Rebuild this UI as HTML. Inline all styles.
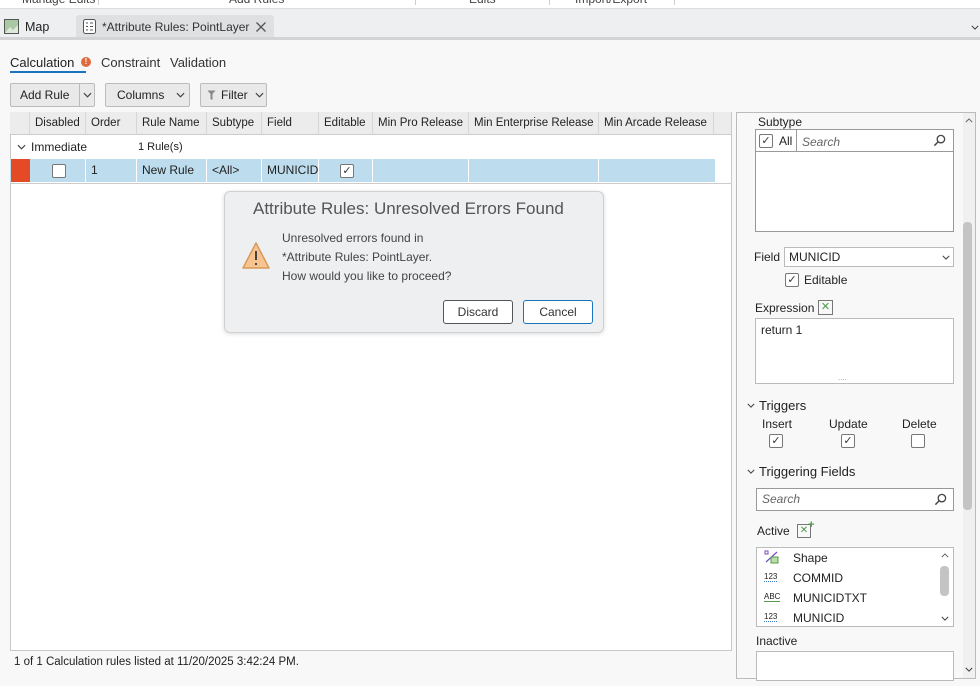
<!DOCTYPE html>
<html><head><style>
*{box-sizing:border-box;margin:0;padding:0}
body{width:980px;height:686px;overflow:hidden;background:#f8f8f8;font-family:"Liberation Sans",sans-serif;font-size:12px;color:#222;position:relative;white-space:nowrap}
.a{position:absolute}
.cb{position:absolute;width:14px;height:14px;border:1px solid #777;background:#fff;border-radius:2px;font-size:11px;line-height:12px;text-align:center;color:#333}
.hd{position:absolute;top:112px;height:23px;background:#ececec;border-right:1px solid #d6d6d6;border-bottom:1px solid #ccc;line-height:23px;padding-left:5px;font-size:11.5px;overflow:hidden}
.dc{position:absolute;top:159px;height:23px;border-right:1px solid #fff;line-height:23px;padding-left:5px}
.btn{position:absolute;top:83px;height:24px;border:1px solid #bbb;border-radius:2px;background:#e9e9e9;line-height:22px;font-size:12px}
.box{position:absolute;background:#fff;border:1px solid #aaa}
.ch{position:absolute}
</style></head><body>
<svg width="0" height="0" style="position:absolute"><defs>
<symbol id="dn" viewBox="0 0 10 6"><path d="M1 1 L5 5 L9 1" fill="none" stroke="#444" stroke-width="1.3"/></symbol>
<symbol id="up" viewBox="0 0 10 6"><path d="M1 5 L5 1 L9 5" fill="none" stroke="#666" stroke-width="1.2"/></symbol>
<symbol id="sr" viewBox="0 0 14 14"><circle cx="8.5" cy="5.5" r="4" fill="none" stroke="#444" stroke-width="1.4"/><path d="M5.5 8.5 L1.5 12.5" stroke="#444" stroke-width="1.6"/></symbol>
</defs></svg>
<!-- top ribbon remnant -->
<div class="a" style="left:0;top:0;width:980px;height:9px;background:#fff;border-bottom:1px solid #ddd;overflow:hidden">
<div class="a" style="left:22px;top:-8px;color:#444">Manage Edits</div>
<div class="a" style="left:98px;top:0;width:1px;height:5px;background:#ccc"></div>
<div class="a" style="left:229px;top:-8px;color:#444">Add Rules</div>
<div class="a" style="left:415px;top:0;width:1px;height:5px;background:#ccc"></div>
<div class="a" style="left:469px;top:-8px;color:#444">Edits</div>
<div class="a" style="left:549px;top:0;width:1px;height:5px;background:#ccc"></div>
<div class="a" style="left:575px;top:-8px;color:#444">Import/Export</div>
<div class="a" style="left:674px;top:0;width:1px;height:5px;background:#ccc"></div>
</div>
<!-- tab bar -->
<div class="a" style="left:0;top:9px;width:980px;height:31px;background:#eeeff1;border-bottom:3px solid #d4d4d6"></div>
<svg class="a" style="left:4px;top:19px" width="15" height="15"><rect x="0.5" y="0.5" width="14" height="14" fill="#a9c9a4" stroke="#555"/><path d="M1 14 L6 8 L9 11 L14 6 V14Z" fill="#dfe9d9"/></svg>
<div class="a" style="left:25px;top:20px;font-size:12.5px">Map</div>
<div class="a" style="left:76px;top:15px;width:198px;height:22px;background:#dfe0e2;border-radius:3px 3px 0 0"></div>
<svg class="a" style="left:83px;top:19px" width="13" height="15"><rect x="0.5" y="0.5" width="12" height="14" rx="2" fill="#fff" stroke="#555"/><path d="M3 4h2M7 4h3M3 7.5h2M7 7.5h3M3 11h2M7 11h3" stroke="#555"/></svg>
<div class="a" style="left:102px;top:20px;font-size:12px;color:#333">*Attribute Rules: PointLayer</div>
<svg class="a" style="left:256px;top:22px" width="10" height="10"><path d="M0.5 0.5L9.5 9.5M9.5 0.5L0.5 9.5" stroke="#555" stroke-width="1.3"/></svg>
<svg class="a" style="left:971px;top:25px" width="8" height="5"><use href="#dn"/></svg>
<!-- sub tabs -->
<div class="a" style="left:10px;top:55px;font-size:13px">Calculation</div>
<div class="a" style="left:81px;top:57px;width:10px;height:10px;border-radius:50%;background:#e06a3c;color:#fff;font-size:8px;line-height:10px;text-align:center;font-weight:bold">!</div>
<div class="a" style="left:10px;top:71px;width:76px;height:2px;background:#1a73c0"></div>
<div class="a" style="left:101px;top:55px;font-size:13px;color:#333">Constraint</div>
<div class="a" style="left:170px;top:55px;font-size:13px;color:#333">Validation</div>
<!-- buttons -->
<div class="btn" style="left:10px;width:85px"><span style="padding-left:9px">Add Rule</span><span class="a" style="left:68px;top:-1px;width:1px;height:24px;background:#bbb"></span><svg class="a" style="left:72px;top:8px" width="9" height="6"><use href="#dn"/></svg></div>
<div class="btn" style="left:105px;width:85px"><span style="padding-left:11px">Columns</span><svg class="a" style="left:70px;top:8px" width="9" height="6"><use href="#dn"/></svg></div>
<div class="btn" style="left:200px;width:67px"><svg class="a" style="left:6px;top:6px" width="9" height="11"><path d="M0.5 0.5H8.5L5.5 4V10L3.5 9V4Z" fill="#888"/></svg><span class="a" style="left:20px">Filter</span><svg class="a" style="left:54px;top:8px" width="9" height="6"><use href="#dn"/></svg></div>
<!-- grid -->
<div class="a" style="left:10px;top:112px;width:722px;height:539px;background:#fff;border:1px solid #c8c8c8"></div>
<div class="hd" style="left:10px;width:20px"></div>
<div class="hd" style="left:30px;width:56px">Disabled</div>
<div class="hd" style="left:86px;width:51px">Order</div>
<div class="hd" style="left:137px;width:70px">Rule Name</div>
<div class="hd" style="left:207px;width:55px">Subtype</div>
<div class="hd" style="left:262px;width:57px">Field</div>
<div class="hd" style="left:319px;width:54px">Editable</div>
<div class="hd" style="left:373px;width:96px">Min Pro Release</div>
<div class="hd" style="left:469px;width:130px">Min Enterprise Release</div>
<div class="hd" style="left:599px;width:115px">Min Arcade Release</div>
<div class="hd" style="left:714px;width:17px;border-right:none"></div>
<svg class="a" style="left:17px;top:144px" width="9" height="6"><use href="#dn"/></svg>
<div class="a" style="left:31px;top:140px">Immediate</div>
<div class="a" style="left:138px;top:141px;font-size:11px">1 Rule(s)</div>
<div class="a" style="left:10px;top:159px;width:705px;height:23px;background:#bddcee"></div>
<div class="a" style="left:11px;top:159px;width:19px;height:23px;background:#e44a25"></div>
<div class="dc" style="left:30px;width:56px"></div>
<div class="cb" style="left:52px;top:164px"></div>
<div class="dc" style="left:86px;width:51px">1</div>
<div class="dc" style="left:137px;width:70px">New Rule</div>
<div class="dc" style="left:207px;width:55px">&lt;All&gt;</div>
<div class="dc" style="left:262px;width:57px;overflow:hidden">MUNICID</div>
<div class="dc" style="left:319px;width:54px"></div>
<div class="cb" style="left:340px;top:164px">✓</div>
<div class="dc" style="left:373px;width:96px"></div>
<div class="dc" style="left:469px;width:130px"></div>
<div class="a" style="left:10px;top:183px;width:722px;height:1px;background:#ccc"></div>
<!-- status -->
<div class="a" style="left:14px;top:656px;font-size:11.5px">1 of 1 Calculation rules listed at 11/20/2025 3:42:24 PM.</div>
<!-- dialog -->
<div class="a" style="left:224px;top:191px;width:380px;height:142px;background:#eeeff1;border:1px solid #d0d0d0;border-radius:6px;box-shadow:0 1px 4px rgba(0,0,0,.15)"></div>
<div class="a" style="left:253px;top:199px;font-size:17px;color:#555">Attribute Rules: Unresolved Errors Found</div>
<svg class="a" style="left:241px;top:241px" width="30" height="29"><path d="M15 2 L28 27 L2 27 Z" fill="#f7c48f" stroke="#d89a5a" stroke-width="1.5" stroke-linejoin="round"/><path d="M15 10v9M15 22v2" stroke="#444" stroke-width="2"/></svg>
<div class="a" style="left:282px;top:229px;color:#444;line-height:19px;font-size:12px">Unresolved errors found in<br>*Attribute Rules: PointLayer.<br>How would you like to proceed?</div>
<div class="a" style="left:443px;top:300px;width:70px;height:24px;border:1px solid #555;border-radius:3px;background:#fff;text-align:center;line-height:22px;color:#333">Discard</div>
<div class="a" style="left:523px;top:300px;width:70px;height:24px;border:1px solid #1a73c0;border-radius:3px;background:#fff;text-align:center;line-height:22px;color:#333">Cancel</div>
<!-- right panel -->
<div class="a" style="left:736px;top:112px;width:240px;height:567px;border:1px solid #bbb;background:#f8f8f8"></div>
<div class="a" style="left:963px;top:113px;width:12px;height:565px;background:#f0f0f0"></div>
<div class="a" style="left:963px;top:222px;width:9px;height:288px;background:#c4c4c4;border-radius:4px"></div>
<svg class="a" style="left:965px;top:118px" width="8" height="5"><use href="#up"/></svg>
<svg class="a" style="left:965px;top:667px" width="8" height="5"><use href="#dn"/></svg>
<div class="a" style="left:758px;top:115px">Subtype</div>
<div class="box" style="left:755px;top:129px;width:199px;height:103px;border-color:#999"></div>
<div class="a" style="left:755px;top:129px;width:199px;height:23px;border-bottom:1px solid #999"></div>
<div class="cb" style="left:759px;top:134px">✓</div>
<div class="a" style="left:779px;top:134px">All</div>
<div class="a" style="left:796px;top:130px;width:1px;height:22px;background:#999"></div>
<div class="a" style="left:802px;top:135px;font-style:italic;color:#666">Search</div>
<svg class="a" style="left:933px;top:134px" width="13" height="13"><use href="#sr"/></svg>
<div class="a" style="left:754px;top:250px">Field</div>
<div class="box" style="left:784px;top:247px;width:170px;height:20px;border-color:#bbb;padding-left:4px;line-height:18px">MUNICID<svg class="a" style="left:157px;top:7px" width="8" height="5"><use href="#dn"/></svg></div>
<div class="cb" style="left:785px;top:273px">✓</div>
<div class="a" style="left:804px;top:273px">Editable</div>
<div class="a" style="left:755px;top:301px">Expression</div>
<div class="a" style="left:818px;top:300px;width:15px;height:15px;border:1px solid #777;color:#4a9a4a;font-size:11px;line-height:13px;text-align:center">✕</div>
<div class="box" style="left:755px;top:318px;width:199px;height:66px;border-color:#bbb;padding:4px 5px">return 1</div>
<div class="a" style="left:838px;top:373px;font-size:8px;color:#999">....</div>
<svg class="a" style="left:747px;top:403px" width="8" height="5"><use href="#dn"/></svg>
<div class="a" style="left:759px;top:398px;font-size:13px">Triggers</div>
<div class="a" style="left:762px;top:417px">Insert</div>
<div class="a" style="left:829px;top:417px">Update</div>
<div class="a" style="left:902px;top:417px">Delete</div>
<div class="cb" style="left:769px;top:434px">✓</div>
<div class="cb" style="left:841px;top:434px">✓</div>
<div class="cb" style="left:911px;top:434px"></div>
<svg class="a" style="left:747px;top:469px" width="8" height="5"><use href="#dn"/></svg>
<div class="a" style="left:759px;top:464px;font-size:13px">Triggering Fields</div>
<div class="box" style="left:756px;top:488px;width:198px;height:23px;border-color:#999;padding-left:5px;line-height:21px;font-style:italic;color:#666">Search<svg class="a" style="left:177px;top:4px" width="13" height="13"><use href="#sr"/></svg></div>
<div class="a" style="left:757px;top:524px">Active</div>
<div class="a" style="left:797px;top:524px;width:14px;height:14px;border:1px solid #777;color:#4a9a4a;font-size:10px;line-height:12px;text-align:center">✕</div>
<div class="a" style="left:808px;top:519px;color:#4a9a4a;font-size:11px;font-weight:bold">+</div>
<div class="box" style="left:756px;top:547px;width:198px;height:80px;border-color:#bbb"></div>
<div class="a" style="left:940px;top:566px;width:9px;height:30px;background:#c4c4c4;border-radius:4px"></div>
<svg class="a" style="left:941px;top:553px" width="8" height="5"><use href="#up"/></svg>
<svg class="a" style="left:941px;top:616px" width="8" height="5"><use href="#dn"/></svg>
<svg class="a" style="left:764px;top:550px" width="16" height="14"><path d="M2 12 L13 2" stroke="#7a4bc4" stroke-width="1.2"/><rect x="7" y="7" width="7" height="6" fill="#b7e0a8" stroke="#5a9a4a"/><rect x="1" y="1" width="3" height="3" fill="#fff" stroke="#7a4bc4"/></svg>
<div class="a" style="left:793px;top:551px">Shape</div>
<div class="a" style="left:764px;top:572px;font-size:8px;border-bottom:1px dotted #3a7ac4;line-height:9px">123</div>
<div class="a" style="left:793px;top:571px">COMMID</div>
<div class="a" style="left:764px;top:592px;font-size:8px;border-bottom:1px solid #5a9a4a;line-height:9px">ABC</div>
<div class="a" style="left:793px;top:591px">MUNICIDTXT</div>
<div class="a" style="left:764px;top:612px;font-size:8px;border-bottom:1px dotted #3a7ac4;line-height:9px">123</div>
<div class="a" style="left:793px;top:611px">MUNICID</div>
<div class="a" style="left:756px;top:634px">Inactive</div>
<div class="box" style="left:756px;top:651px;width:198px;height:30px;border-color:#bbb"></div>
</body></html>
